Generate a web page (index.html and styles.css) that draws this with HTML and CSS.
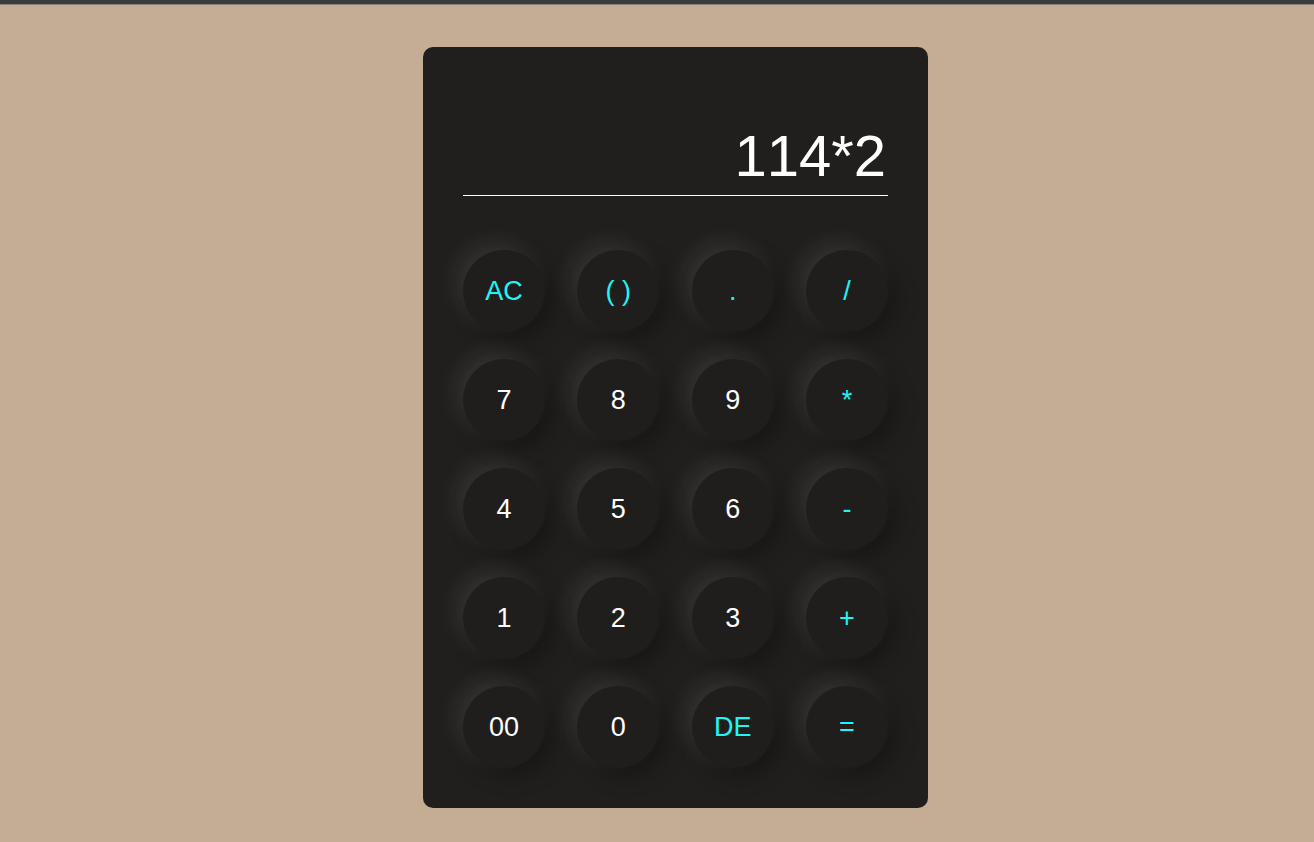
FILE: index.html
```html
<!DOCTYPE html>
<html>
<head>
<meta charset="utf-8">
<title>Calculator</title>
<link rel="stylesheet" href="styles.css">
</head>
<body>
<div class="topbar"></div>
<main class="page">
  <div class="calc">
    <div class="display"><span class="expr">114*2</span></div>
    <div class="keys">
      <button class="key op">AC</button>
      <button class="key op">( )</button>
      <button class="key op">.</button>
      <button class="key op">/</button>
      <button class="key">7</button>
      <button class="key">8</button>
      <button class="key">9</button>
      <button class="key op">*</button>
      <button class="key">4</button>
      <button class="key">5</button>
      <button class="key">6</button>
      <button class="key op">-</button>
      <button class="key">1</button>
      <button class="key">2</button>
      <button class="key">3</button>
      <button class="key op">+</button>
      <button class="key">00</button>
      <button class="key">0</button>
      <button class="key op">DE</button>
      <button class="key op">=</button>
    </div>
  </div>
</main>
</body>
</html>
```

FILE: styles.css
```css
* { box-sizing: border-box; }
html, body {
  margin: 0;
  padding: 0;
}
body {
  background: #c4ad94;
  font-family: "Liberation Sans", Arial, sans-serif;
  height: 842px;
  overflow: hidden;
}
.topbar {
  height: 5px;
  background: #3c3c3c;
  border-bottom: 1px solid #858079;
}
.page {
  padding: 42px 0 0 423px;
}
.calc {
  width: 505px;
  height: 761px;
  background: #201f1e;
  border-radius: 10px;
  padding: 40px 40px 40px 40px;
}
.display {
  height: 109px;
  border-bottom: 1px solid #ffffff;
  display: flex;
  justify-content: flex-end;
  align-items: flex-end;
  padding-bottom: 10px;
  padding-right: 2px;
}
.expr {
  color: #ffffff;
  font-size: 58px;
  line-height: 1;
  font-kerning: none;
}
.keys {
  margin-top: 54px;
  display: grid;
  grid-template-columns: repeat(4, 82px);
  grid-auto-rows: 82px;
  justify-content: space-between;
  row-gap: 27px;
}
.key {
  width: 82px;
  height: 82px;
  border: none;
  border-radius: 50%;
  background: #1f1e1d;
  color: #ffffff;
  font-family: "Liberation Sans", Arial, sans-serif;
  font-size: 27px;
  font-kerning: none;
  padding: 0;
  box-shadow: -8px -8px 22px rgba(255, 255, 255, 0.09), 8px 8px 22px rgba(0, 0, 0, 0.3);
  cursor: pointer;
}
.key.op {
  color: #1ff5f5;
}
```
